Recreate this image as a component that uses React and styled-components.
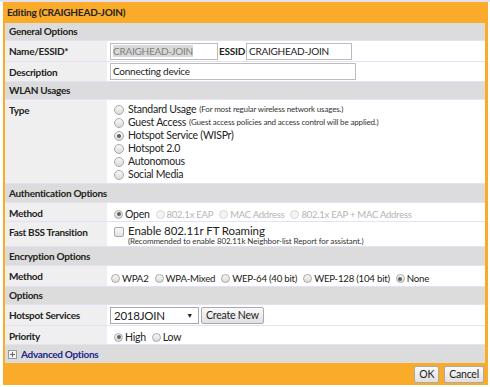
import React from "react"
import styled, { createGlobalStyle } from "styled-components"

const Global = createGlobalStyle`
    body {
        margin: 0;
        background: #fff;
        font-family: Lato, "Liberation Sans", sans-serif;
        font-size: 10.5px;
        letter-spacing: -0.25px;
        line-height: 13px;
        color: #222;
    }
`

const Page = styled.div`
    width: 490px;
    height: 387px;
    overflow: hidden;
    background: #fff;
`

const TopLine = styled.div`
    height: 2px;
    background: #e4e0ee;
`

const Dialog = styled.div`
    margin-left: 3px;
    width: 485px;
    background: #fbab2a;
    padding: 0 3px 0 2px;
    box-sizing: border-box;
`

const Title = styled.div`
    height: 21px;
    line-height: 21px;
    font-weight: bold;
    font-size: 10px;
    letter-spacing: -0.2px;
    padding-left: 2px;
`

const Body = styled.div`
    background: #fff;
`

const Section = styled.div`
    background: #dcdcdc;
    height: ${p => p.h || 17}px;
    font-weight: bold;
    font-size: 10px;
    letter-spacing: -0.3px;
    padding-left: 4px;
    border-bottom: ${p => p.last ? "0" : "1px solid #e6e0f4"};
    display: flex;
    align-items: center;
    gap: 4px;
`

const Row = styled.div`
    display: grid;
    grid-template-columns: 102px 1fr;
    border-bottom: 1px solid #e6e0f4;
    height: ${p => p.h || 20}px;
    overflow: hidden;
`

const Label = styled.div`
    background: #efefef;
    font-weight: bold;
    font-size: 10px;
    letter-spacing: -0.3px;
    padding: 4px 0 0 4px;
    white-space: nowrap;
`

const Value = styled.div`
    padding: ${p => p.pad || "2px 3px"};
    display: flex;
    flex-direction: ${p => p.col ? "column" : "row"};
    align-items: ${p => p.col ? "flex-start" : "center"};
    font-size: ${p => p.fs || "inherit"};
`

const TextInput = styled.div`
    width: ${p => p.w}px;
    height: 17px;
    box-sizing: border-box;
    border: 1px solid #bcbcbc;
    padding: 0 2px;
    line-height: 15px;
    font-size: 10px;
    color: ${p => p.disabled ? "#808080" : "#222"};
    background: #fff;
    white-space: nowrap;
    overflow: hidden;
    span{
        background: ${p => p.disabled ? "#d9d9d9" : "transparent"};
    }
`

const Inline = styled.span`
    font-weight: bold;
    font-size: 10px;
    margin: 0 1px;
`

const Option = styled.label`
    display: flex;
    align-items: center;
    height: 13px;
    font-size: ${p => p.disabled ? "9.5px" : "inherit"};
    color: ${p => p.disabled ? "#b4b4b4" : "#222"};
    margin-right: ${p => p.mr || 0}px;
    white-space: nowrap;
`

const Radio = styled.span`
    width: ${p => p.size || 10}px;
    height: ${p => p.size || 10}px;
    border-radius: 50%;
    box-sizing: border-box;
    border: 1px solid ${p => p.disabled ? "#d8d8d8" : "#a8a8a8"};
    background: ${p => p.disabled ? "#f4f4f4" : "linear-gradient(#f8f8f8, #dadada)"};
    margin-right: ${p => p.gap ?? 4}px;
    display: flex;
    align-items: center;
    justify-content: center;
    flex: none;
    &:after{
        content: "";
        width: 4px;
        height: 4px;
        border-radius: 50%;
        background: #606060;
        display: ${p => p.on ? "block" : "none"};
    }
`

const Note = styled.span`
    font-size: 8px;
    letter-spacing: -0.15px;
    margin-left: 3px;
    color: #333;
`

const Check = styled.span`
    width: 10px;
    height: 10px;
    box-sizing: border-box;
    border: 1px solid #a8a8a8;
    border-radius: 2px;
    background: linear-gradient(#f8f8f8, #e2e2e2);
    margin: 3px 4px 0 0;
    flex: none;
`

const CheckWrap = styled.div`
    display: flex;
    align-items: flex-start;
`

const CheckText = styled.div`
    font-size: 11.5px;
    letter-spacing: -0.1px;
`

const SmallLine = styled.div`
    font-size: 8px;
    letter-spacing: -0.1px;
    color: #333;
    line-height: 9px;
`

const Select = styled.div`
    width: 89px;
    height: 17px;
    box-sizing: border-box;
    border: 1px solid #a8a8a8;
    display: flex;
    align-items: center;
    justify-content: space-between;
    padding: 0 5px 0 3px;
    font-size: 11.5px;
    &:after{
        content: "▼";
        font-size: 7px;
    }
`

const Button = styled.button`
    height: 17px;
    padding: 0 4px;
    border: 1px solid #aaa;
    border-radius: 2px;
    background: linear-gradient(#fafafa, #e0e0e0);
    font-family: inherit;
    font-size: 10.5px;
    letter-spacing: -0.2px;
    line-height: 13px;
    color: #222;
    margin-left: ${p => p.ml || 0}px;
`

const Plus = styled.span`
    width: 7px;
    height: 7px;
    border: 1px solid #999;
    background: #f4f4f4;
    position: relative;
    margin-left: -1px;
    &:before, &:after{
        content: "";
        position: absolute;
        background: #666;
    }
    &:before{ left: 1px; right: 1px; top: 3px; height: 1px; }
    &:after{ top: 1px; bottom: 1px; left: 3px; width: 1px; }
`

const Link = styled.a`
    color: #22228a;
    font-weight: bold;
`

const Footer = styled.div`
    height: 22px;
    display: flex;
    align-items: center;
    justify-content: flex-end;
    padding-right: 1px;
`

const radio = (text, opts = {}) =>
    <Option disabled={opts.disabled} mr={opts.mr}>
        <Radio on={opts.on} disabled={opts.disabled} size={opts.size} gap={opts.gap} />
        {text}{opts.note && <Note>{opts.note}</Note>}
    </Option>

const inline = (text, opts = {}) => radio(text, { size: 9, gap: 2, mr: 6, ...opts })

const App = () =>
    <Page>
        <Global />
        <TopLine />
        <Dialog>
            <Title>Editing (CRAIGHEAD-JOIN)</Title>
            <Body>
                <Section>General Options</Section>
                <Row>
                    <Label>Name/ESSID*</Label>
                    <Value>
                        <TextInput w={108} disabled><span>CRAIGHEAD-JOIN</span></TextInput>
                        <Inline>ESSID</Inline>
                        <TextInput w={106}>CRAIGHEAD-JOIN</TextInput>
                    </Value>
                </Row>
                <Row h={19}>
                    <Label>Description</Label>
                    <Value pad="1px 3px">
                        <TextInput w={246}>Connecting device</TextInput>
                    </Value>
                </Row>
                <Section>WLAN Usages</Section>
                <Row h={83}>
                    <Label>Type</Label>
                    <Value col pad="3px 7px">
                        {radio("Standard Usage", { note: "(For most regular wireless network usages.)" })}
                        {radio("Guest Access", { note: "(Guest access policies and access control will be applied.)" })}
                        {radio("Hotspot Service (WISPr)", { on: true })}
                        {radio("Hotspot 2.0")}
                        {radio("Autonomous")}
                        {radio("Social Media")}
                    </Value>
                </Row>
                <Section h={18}>Authentication Options</Section>
                <Row h={18}>
                    <Label>Method</Label>
                    <Value pad="4px 7px 0">
                        {inline("Open", { on: true })}
                        {inline("802.1x EAP", { disabled: true })}
                        {inline("MAC Address", { disabled: true })}
                        {inline("802.1x EAP + MAC Address", { disabled: true })}
                    </Value>
                </Row>
                <Row h={24}>
                    <Label>Fast BSS Transition</Label>
                    <Value pad="2px 7px 0">
                        <CheckWrap>
                            <Check />
                            <div>
                                <CheckText>Enable 802.11r FT Roaming</CheckText>
                                <SmallLine>(Recommended to enable 802.11k Neighbor-list Report for assistant.)</SmallLine>
                            </div>
                        </CheckWrap>
                    </Value>
                </Row>
                <Section h={18}>Encryption Options</Section>
                <Row>
                    <Label>Method</Label>
                    <Value pad="5px 4px 0" fs="9.7px">
                        {inline("WPA2")}
                        {inline("WPA-Mixed")}
                        {inline("WEP-64 (40 bit)")}
                        {inline("WEP-128 (104 bit)")}
                        {inline("None", { on: true })}
                    </Value>
                </Row>
                <Section>Options</Section>
                <Row>
                    <Label>Hotspot Services</Label>
                    <Value>
                        <Select>2018JOIN</Select>
                        <Button ml={2}>Create New</Button>
                    </Value>
                </Row>
                <Row h={18}>
                    <Label>Priority</Label>
                    <Value pad="4px 7px 0">
                        {inline("High", { on: true })}
                        {inline("Low")}
                    </Value>
                </Row>
                <Section h={18} last><Plus /><Link>Advanced Options</Link></Section>
            </Body>
            <Footer>
                <Button>OK</Button>
                <Button ml={5}>Cancel</Button>
            </Footer>
        </Dialog>
    </Page>

export default App
